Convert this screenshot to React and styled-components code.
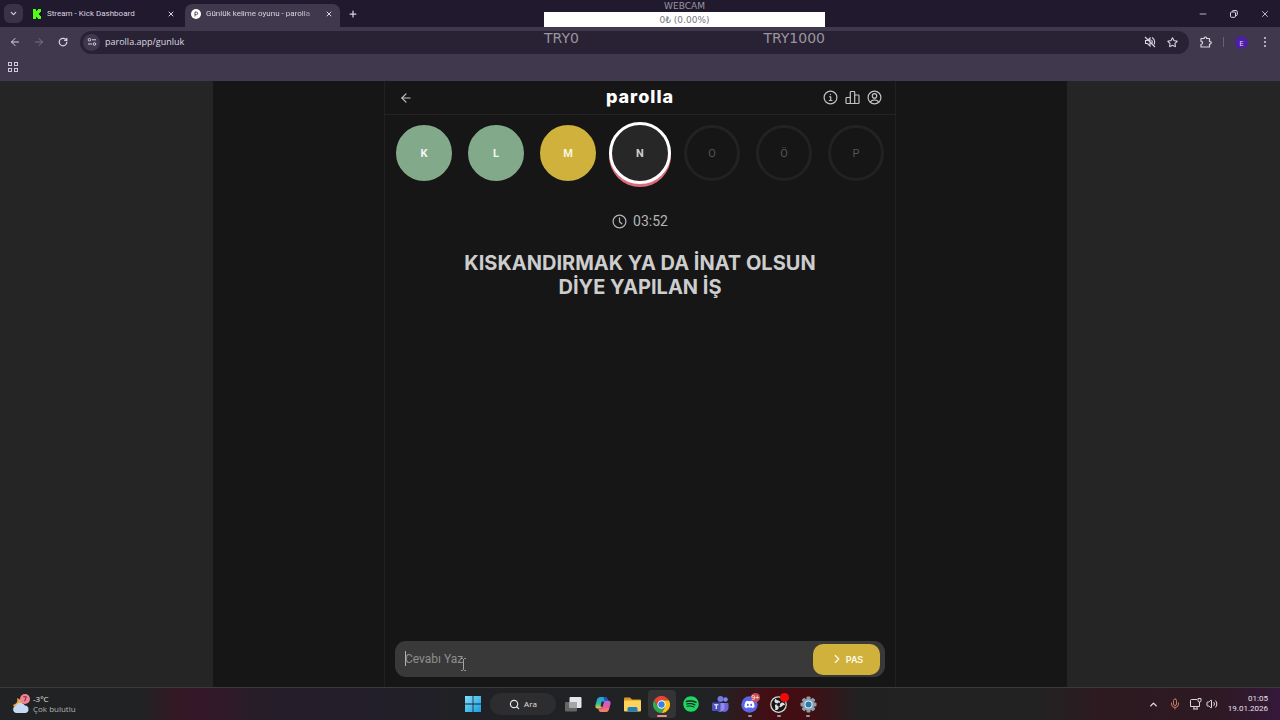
import React from "react";
import styled, { createGlobalStyle } from "styled-components";
import {
  ArrowLeft,
  ArrowRight,
  ChevronDown,
  ChevronRight,
  ChevronUp,
  Mic,
  Minus,
  Plus,
  RotateCw,
  Search,
  Star,
  Volume2,
  X
} from "lucide-react";
import { FaDiscord, FaSpotify } from "react-icons/fa";

const GlobalStyle = createGlobalStyle`
  * {
    box-sizing: border-box;
  }
  body {
    margin: 0;
    background: #161616;
    font-family: "Open Sans", "Noto Sans", sans-serif;
  }
  button {
    border: 0;
    padding: 0;
    background: none;
    color: inherit;
    font: inherit;
  }
`;

const Screen = styled.div`
  display: flex;
  flex-direction: column;
  min-height: 100vh;
  position: relative;
`;

/* browser */

const TabStrip = styled.div`
  display: flex;
  align-items: flex-end;
  height: 27px;
  padding-left: 4px;
  background: #21192d;
  color: #d9d4e0;
`;

const TabSearch = styled.button`
  display: grid;
  place-items: center;
  width: 19px;
  height: 19px;
  margin-bottom: 4px;
  border-radius: 6px;
  background: #3a3346;
`;

const Tab = styled.div`
  display: flex;
  align-items: center;
  gap: 5px;
  width: ${({ active }) => (active ? "155px" : "162px")};
  height: 23px;
  padding: ${({ active }) => (active ? "0 6px 4px" : "0 9px 4px")};
  border-radius: 7px 7px 0 0;
  background: ${({ active }) => (active ? "#40384c" : "transparent")};
`;

const TabTitle = styled.span`
  flex: 1;
  overflow: hidden;
  white-space: nowrap;
  font-family: Roboto, sans-serif;
  font-size: 8px;
  line-height: 12px;
  mask-image: ${({ fade }) =>
    fade ? "linear-gradient(90deg, #000 85%, transparent)" : "none"};
`;

const IconButton = styled.button`
  display: grid;
  place-items: center;
  width: ${({ size = 12 }) => size}px;
  height: ${({ size = 12 }) => size}px;
  color: ${({ dim }) => (dim ? "#7b7385" : "inherit")};
`;

const NewTab = styled(IconButton)`
  margin: 0 0 7px 7px;
`;

const WindowControls = styled.div`
  display: flex;
  gap: 19px;
  margin-left: auto;
  padding: 0 9px 7px 0;
`;

const Toolbar = styled.div`
  display: flex;
  align-items: center;
  height: 30px;
  padding: 0 9px;
  background: #40384c;
  color: #d9d4e0;
`;

const NavButtons = styled.div`
  display: flex;
  gap: 12px;
`;

const AddressBar = styled.div`
  display: flex;
  flex: 1;
  align-items: center;
  gap: 10px;
  height: 23px;
  margin: 0 11px;
  padding: 0 11px 0 3px;
  border-radius: 12px;
  background: #292234;
`;

const SiteInfo = styled(IconButton)`
  border-radius: 50%;
  background: #40384c;
  margin-right: -5px;
`;

const AddressInput = styled.input`
  flex: 1;
  min-width: 0;
  padding: 0;
  border: 0;
  outline: 0;
  background: none;
  color: #dedae3;
  font: 9px/14px "Open Sans", sans-serif;
`;

const Extensions = styled.div`
  display: flex;
  align-items: center;
  gap: 11px;
`;

const Divider = styled.span`
  width: 1px;
  height: 10px;
  background: #6a6076;
`;

const Profile = styled.button`
  width: 13px;
  height: 13px;
  border-radius: 50%;
  background: #4c1fa6;
  color: #e4daf5;
  font-size: 8px;
  line-height: 13px;
`;

const Bookmarks = styled.div`
  display: flex;
  align-items: center;
  height: 24px;
  padding: 0 7px 5px;
  background: #40384c;
  color: #cfc9d6;
`;

/* donation goal shown over the browser */

const Goal = styled.div`
  position: absolute;
  top: 0;
  left: 544px;
  width: 281px;
  color: #99959f;
  font-family: "DejaVu Sans", sans-serif;
  font-size: 9px;
  line-height: 12px;
  text-align: center;
`;

const GoalBar = styled.div`
  height: 15px;
  background: #fff;
  color: #77747b;
  line-height: 16px;
`;

const GoalRange = styled.div`
  display: flex;
  justify-content: space-between;
  font-size: 14px;
  line-height: 23px;
`;

/* game */

const Page = styled.main`
  display: flex;
  flex: 1;
  justify-content: center;
  background: #252525;
  font-family: Inter, sans-serif;
`;

const Stage = styled.div`
  display: flex;
  justify-content: center;
  width: 66.7%;
  background: #161616;
`;

const Game = styled.section`
  display: flex;
  flex-direction: column;
  width: 100%;
  max-width: 512px;
  border: solid #212121;
  border-width: 0 1px;
`;

const GameHeader = styled.header`
  display: grid;
  grid-template-columns: 1fr auto 1fr;
  align-items: center;
  height: 34px;
  padding: 0 13px;
  border-bottom: 1px solid #232323;
  color: #c2c2c2;
`;

const Logo = styled.h1`
  margin: 0;
  padding-bottom: 2px;
  color: #fff;
  font-family: Inter, sans-serif;
  font-size: 18px;
  font-weight: 800;
  letter-spacing: 1px;
  line-height: 24px;
`;

const HeaderActions = styled.div`
  display: flex;
  justify-content: flex-end;
  gap: 6px;
`;

const Letters = styled.div`
  display: flex;
  justify-content: space-between;
  padding: 10px 11px;
`;

const letterColors = {
  correct: ["#82aa8a", "#82aa8a", "#f2f7f2"],
  passed: ["#cfb13c", "#cfb13c", "#fbf6e2"],
  current: ["#272727", "#fff", "#cfcfcf"],
  waiting: ["transparent", "#222", "#555"]
};

const Letter = styled.div`
  display: grid;
  place-items: center;
  width: ${({ state }) => (state === "current" ? 62 : 56)}px;
  height: ${({ state }) => (state === "current" ? 62 : 56)}px;
  margin: ${({ state }) => (state === "current" ? "-3px" : "0")};
  border: 3px solid ${({ state }) => letterColors[state][1]};
  border-radius: 50%;
  background: ${({ state }) => letterColors[state][0]};
  box-shadow: ${({ state }) =>
    state === "current" ? "0 3px 0 #dc6b7c" : "none"};
  color: ${({ state }) => letterColors[state][2]};
  font-family: Roboto, sans-serif;
  font-size: 11px;
  font-weight: ${({ state }) => (state === "waiting" ? 400 : 700)};
  line-height: 15px;
`;

const Timer = styled.div`
  display: flex;
  align-items: center;
  justify-content: center;
  gap: 6px;
  margin-top: 20px;
  color: #b5b5b5;
  font-family: Roboto, sans-serif;
  font-size: 14px;
  line-height: 20px;
`;

const Question = styled.h2`
  max-width: 380px;
  margin: 20px auto 0;
  color: #cdcdcd;
  font-size: 20px;
  font-weight: 700;
  line-height: 24px;
  text-align: center;
`;

const AnswerForm = styled.form`
  position: relative;
  display: flex;
  align-items: center;
  height: 36px;
  margin: auto 10px 10px;
  padding: 0 5px 0 10px;
  border-radius: 11px;
  background: #393939;
`;

const AnswerInput = styled.input`
  flex: 1;
  min-width: 0;
  padding: 0;
  border: 0;
  outline: 0;
  background: none;
  color: #ddd;
  font: 12px/20px Roboto, sans-serif;
  &::placeholder {
    color: #8e8e8e;
    opacity: 1;
  }
`;

const Caret = styled.span`
  position: absolute;
  top: 10px;
  left: 10px;
  width: 1px;
  height: 15px;
  background: #b0b0b0;
`;

const Pointer = styled.svg`
  position: absolute;
  top: 17px;
  left: 65px;
`;

const PassButton = styled.button`
  display: flex;
  align-items: center;
  justify-content: center;
  gap: 2px;
  width: 67px;
  height: 31px;
  border-radius: 10px;
  background: #cfb13c;
  color: #fffbea;
  font-size: 9px;
  font-weight: 600;
`;

/* taskbar */

const Taskbar = styled.footer`
  display: grid;
  grid-template-columns: 1fr auto 1fr;
  align-items: center;
  height: 33px;
  padding: 0 12px;
  border-top: 1px solid #3b3b3c;
  background: linear-gradient(
    90deg,
    #202223 0%,
    #212223 11%,
    #351724 14%,
    #32182a 17%,
    #261d29 20%,
    #221e2a 30%,
    #202124 36%,
    #212224 56%,
    #420e14 60%,
    #400e13 63%,
    #222122 67%,
    #222223 81%,
    #2d1a20 86%,
    #2d1923 95%,
    #35183a 100%
  );
  color: #e4e2e3;
  font-size: 8px;
  line-height: 10px;
`;

const Weather = styled.button`
  display: flex;
  align-items: center;
  gap: 3px;
  text-align: left;
`;

const Muted = styled.div`
  color: #b5b3b4;
`;

const Apps = styled.div`
  display: flex;
  align-items: center;
  padding-left: 2px;
`;

const SearchPill = styled.button`
  display: flex;
  align-items: center;
  justify-content: center;
  gap: 4px;
  width: 66px;
  height: 22px;
  margin: 0 3px;
  border-radius: 11px;
  background: #2d2d30;
`;

const Pinned = styled.div`
  display: grid;
  grid-template-columns: repeat(9, 1fr);
  justify-items: center;
  width: 264px;
`;

const TaskButton = styled.button`
  position: relative;
  display: grid;
  place-items: center;
  width: 28px;
  height: 28px;
  border-radius: 4px;
  background: ${({ active }) => (active ? "#343436" : "transparent")};
  &::after {
    content: "";
    position: absolute;
    bottom: 1px;
    width: ${({ active }) => (active ? 10 : 4)}px;
    height: 2px;
    border-radius: 1px;
    background: ${({ active, open }) =>
      active ? "#ef8f87" : open ? "#9b9596" : "transparent"};
  }
`;

const Badge = styled.span`
  position: absolute;
  top: 3px;
  right: 4px;
  min-width: 9px;
  height: 9px;
  border-radius: 5px;
  background: ${({ color }) => color};
  color: #fff;
  font-size: 7px;
  line-height: 9px;
`;

const Tray = styled.div`
  display: flex;
  align-items: center;
  justify-content: flex-end;
`;

const TrayIcon = styled(IconButton)`
  margin-right: ${({ gap }) => gap}px;
`;

const Clock = styled.div`
  font-family: Roboto, sans-serif;
  text-align: right;
`;

const KickIcon = () => (
  <svg width="10" height="10" viewBox="0 0 10 10">
    <rect width="10" height="10" fill="#101a10" />
    <path
      d="M1 0H4V2H5V1H6V0H9V3H8V4H7V6H8V7H9V10H6V9H5V8H4V10H1Z"
      fill="#52fb1a"
    />
  </svg>
);

const ParollaIcon = () => (
  <svg width="10" height="10" viewBox="0 0 10 10">
    <circle cx="5" cy="5" r="5" fill="#fff" />
    <path
      d="M4 7.5V3H5.3A1.3 1.3 0 0 1 5.3 5.7H4"
      fill="none"
      stroke="#55505c"
    />
  </svg>
);

const RestoreIcon = () => (
  <svg width="8" height="8" viewBox="0 0 8 8" fill="none" stroke="#d9d4e0">
    <rect x=".5" y="2" width="5" height="5.3" rx="1" />
    <path d="M2.4 1.8V1.2Q2.4.5 3.2.5H6Q7.3.5 7.3 1.8V4.7Q7.3 5.5 6 5.5" />
  </svg>
);

const TuneIcon = () => (
  <svg width="10" height="10" viewBox="0 0 10 10" fill="none" stroke="#d9d4e0">
    <circle cx="2.5" cy="2.8" r="1.3" />
    <path d="M5 2.8H9M1 7H5" />
    <circle cx="7.5" cy="7" r="1.3" />
  </svg>
);

const MutedIcon = () => (
  <svg
    width="12"
    height="12"
    viewBox="0 0 24 24"
    fill="none"
    stroke="currentColor"
    strokeWidth="2.2"
  >
    <path d="M3 9H7L12 4V20L7 15H3ZM15 8Q18 12 15 16M16 3Q24 8 20 17M2 2L22 22" />
  </svg>
);

const ExtensionIcon = () => (
  <svg
    width="12"
    height="12"
    viewBox="0 0 12 12"
    fill="none"
    stroke="currentColor"
    strokeWidth="1.2"
    strokeLinejoin="round"
  >
    <path d="M1 2.5H4.2Q4 1 5.4 1T6.6 2.5H9.5V5.5Q11.2 5.3 11.2 6.7T9.5 8V11H1V8.3Q2.6 8.3 2.6 6.8T1 5.3Z" />
  </svg>
);

const GridIcon = () => (
  <svg
    width="12"
    height="12"
    viewBox="0 0 12 12"
    fill="none"
    stroke="#cfc9d6"
    shapeRendering="crispEdges"
  >
    <path d="M1.5 1.5H4.5V4.5H1.5ZM7.5 1.5H10.5V4.5H7.5ZM1.5 7.5H4.5V10.5H1.5ZM7.5 7.5H10.5V10.5H7.5Z" />
  </svg>
);

const DotsIcon = () => (
  <svg width="4" height="12" viewBox="0 0 4 12" fill="#d9d4e0">
    <circle cx="2" cy="2" r="1" />
    <circle cx="2" cy="6" r="1" />
    <circle cx="2" cy="10" r="1" />
  </svg>
);

const StrokeIcon = ({ children }) => (
  <svg
    width="15"
    height="15"
    viewBox="0 0 15 15"
    fill="none"
    stroke="currentColor"
    strokeWidth="1.2"
    strokeLinecap="round"
    strokeLinejoin="round"
  >
    {children}
  </svg>
);

const InfoIcon = () => (
  <StrokeIcon>
    <circle cx="7.5" cy="7.5" r="6.4" />
    <path d="M6.6 6.8H7.7V10.3M6.3 10.5H9M7.4 4.4V4.6" />
  </StrokeIcon>
);

const StatsIcon = () => (
  <StrokeIcon>
    <path d="M5.3 13.5H1.8Q1 13.5 1 12.7V8.3Q1 7.5 1.8 7.5H5.3" />
    <path d="M5.3 13.5V2.3Q5.3 1.5 6.1 1.5H8.9Q9.7 1.5 9.7 2.3V13.5Z" />
    <path d="M9.7 5H13.2Q14 5 14 5.8V12.7Q14 13.5 13.2 13.5H9.7" />
  </StrokeIcon>
);

const UserIcon = () => (
  <StrokeIcon>
    <circle cx="7.5" cy="7.5" r="6.4" />
    <circle cx="7.5" cy="5.9" r="2.2" />
    <path d="M3.4 12Q4.4 9.8 7.5 9.8T11.6 12" />
  </StrokeIcon>
);

const ClockIcon = () => (
  <StrokeIcon>
    <circle cx="7.5" cy="7.5" r="6.4" />
    <path d="M7.5 3.8V7.7L9.8 9.8" />
  </StrokeIcon>
);

const WeatherIcon = () => (
  <svg width="18" height="21" viewBox="0 0 18 21">
    <path d="M5 4Q7 9 1 11Q3 15 8 14L11 7Z" fill="#efa83d" />
    <path
      d="M4 19A3.6 3.6 0 0 1 3.8 12A5 5 0 0 1 13 11.5A3.8 3.8 0 0 1 13.5 19Z"
      fill="#c5d9f5"
    />
    <circle cx="13" cy="5" r="5" fill="#f08493" />
    <path d="M11.3 2.8H14.4L12.6 7.2" fill="none" stroke="#702b3b" />
  </svg>
);

const StartIcon = () => (
  <svg width="16" height="16" viewBox="0 0 16 16">
    <defs>
      <linearGradient id="start" x2="1" y2="1">
        <stop stopColor="#83dcf8" />
        <stop offset="1" stopColor="#159fe3" />
      </linearGradient>
    </defs>
    <path
      d="M0 0H7.6V7.6H0ZM8.4 0H16V7.6H8.4ZM0 8.4H7.6V16H0ZM8.4 8.4H16V16H8.4Z"
      fill="url(#start)"
    />
  </svg>
);

const TaskViewIcon = () => (
  <svg width="17" height="15" viewBox="0 0 17 15">
    <rect y="5" width="12" height="9.5" rx="1" fill="#656565" />
    <rect x="4.5" width="12" height="11" rx="1" fill="#e5e5e5" />
    <path d="M4.5 5H12V11H5.5Q4.5 11 4.5 10Z" fill="#a5a5a5" />
  </svg>
);

const CopilotIcon = () => (
  <svg width="16" height="15" viewBox="0 0 16 15">
    <defs>
      <linearGradient id="cop1" x2="0" y2="1">
        <stop stopColor="#239be9" />
        <stop offset=".55" stopColor="#31b9a2" />
        <stop offset="1" stopColor="#ecc53c" />
      </linearGradient>
      <linearGradient id="cop2" x2="0" y2="1">
        <stop stopColor="#a768ee" />
        <stop offset=".5" stopColor="#e557a1" />
        <stop offset="1" stopColor="#f48a55" />
      </linearGradient>
    </defs>
    <path
      d="M5 0H10Q12 0 12.4 2L12.8 3.6H10.5Q9 3.6 8.6 5L7 10Q6.6 11.5 5 11.5H3Q-.3 11.5.5 8L2 2.5Q2.7 0 5 0Z"
      fill="url(#cop1)"
    />
    <path
      d="M11 15H6Q4 15 3.6 13L3.2 11.5H5.5Q7 11.5 7.4 10L9 5Q9.4 3.6 11 3.6H13Q16.3 3.6 15.5 7L14 12.5Q13.3 15 11 15Z"
      fill="url(#cop2)"
    />
    <path d="M6.6 4.6H8.7L7.6 9.5H5.5Z" fill="#25243a" />
    <path d="M8.5 0H10Q12 0 12.4 2L12.8 3.6H9.6Z" fill="#1955b5" />
  </svg>
);

const FolderIcon = () => (
  <svg width="17" height="15" viewBox="0 0 17 15">
    <path d="M0 1.5Q0 .5 1 .5H6L8 2.5H16Q17 2.5 17 3.5V12H0Z" fill="#d99a23" />
    <rect y="3.5" width="17" height="11" rx="1" fill="#ffd35a" />
    <path d="M3.5 14.5V11.5Q3.5 10 5 10H12Q13.5 10 13.5 11.5V14.5Z" fill="#207fc2" />
  </svg>
);

const ChromeIcon = () => (
  <svg width="17" height="17" viewBox="0 0 48 48">
    <path d="M24 12H44.8A24 24 0 0 1 24 48L34.4 30Z" fill="#fbc116" />
    <path
      d="M3.2 12L13.6 30A12 12 0 0 1 24 12H44.8A24 24 0 0 0 3.2 12Z"
      fill="#e94335"
    />
    <path
      d="M3.2 12L13.6 30L24 36L34.4 30L24 48A24 24 0 0 1 3.2 12Z"
      fill="#34a853"
    />
    <circle cx="24" cy="24" r="12" fill="#fff" />
    <circle cx="24" cy="24" r="9" fill="#3b7ee8" />
  </svg>
);

const TeamsIcon = () => (
  <svg width="17" height="17" viewBox="0 0 17 17">
    <circle cx="13.5" cy="3.5" r="2.3" fill="#7f85ee" />
    <circle cx="8.5" cy="3" r="3" fill="#7178e5" />
    <path d="M10 7H15.5Q16.5 7 16.5 8V12A4 4 0 0 1 10 15Z" fill="#6e64d5" />
    <path d="M4 7H11.5Q12.5 7 12.5 8V12A4.3 4.3 0 0 1 4 12Z" fill="#9189ec" />
    <rect y="6.5" width="8.5" height="8.5" rx="1" fill="#4b50bc" />
    <path d="M2.2 8.7H6.3M4.25 8.7V13" stroke="#fff" strokeWidth="1.1" />
  </svg>
);

const DiscordIcon = () => (
  <svg width="17" height="17" viewBox="0 0 17 17">
    <circle cx="8.5" cy="8.5" r="8.2" fill="#5964e8" />
    <FaDiscord x="3" y="3" size={11} color="#fff" />
  </svg>
);

const ObsIcon = () => (
  <svg width="17" height="17" viewBox="0 0 34 34">
    <circle
      cx="17"
      cy="17"
      r="15.5"
      fill="#151515"
      stroke="#d8d8d8"
      strokeWidth="2.5"
    />
    {[0, 120, 240].map(angle => (
      <path
        key={angle}
        d="M15 15C8 15 7 8 12 5C12 9 16 8 19 10Q21 12 20 14Q17 12 15 15Z"
        fill="#dedede"
        transform={`rotate(${angle} 17 17)`}
      />
    ))}
  </svg>
);

const SettingsIcon = () => (
  <svg width="17" height="17" viewBox="0 0 34 34">
    {[0, 45, 90, 135].map(angle => (
      <rect
        key={angle}
        x="13"
        y="1"
        width="8"
        height="32"
        rx="2"
        fill="#8e9da9"
        transform={`rotate(${angle} 17 17)`}
      />
    ))}
    <circle cx="17" cy="17" r="12" fill="#8e9da9" />
    <circle cx="17" cy="17" r="8" fill="#e1eef5" />
    <circle cx="17" cy="17" r="6" fill="#2779ae" />
  </svg>
);

const NetworkIcon = () => (
  <svg width="12" height="12" viewBox="0 0 12 12" fill="none" stroke="#dcd8da">
    <path d="M7 1.5H1.5Q.5 1.5.5 2.5V8.5H9.5V6.5M3 11H8M4 8.5V11M7 8.5V11" />
    <path d="M8 .5V3Q8 4 9.5 4T11 3V.5ZM9.5 4V7" />
  </svg>
);

const letters = [
  ["K", "correct"],
  ["L", "correct"],
  ["M", "passed"],
  ["N", "current"],
  ["O", "waiting"],
  ["Ö", "waiting"],
  ["P", "waiting"]
];

const apps = [
  { name: "Görev görünümü", icon: <TaskViewIcon /> },
  { name: "Copilot", icon: <CopilotIcon /> },
  { name: "Dosya Gezgini", icon: <FolderIcon /> },
  { name: "Chrome", icon: <ChromeIcon />, active: true },
  { name: "Spotify", icon: <FaSpotify size={16} color="#1ed760" /> },
  { name: "Teams", icon: <TeamsIcon /> },
  { name: "Discord", icon: <DiscordIcon />, open: true, badge: "9+" },
  { name: "OBS", icon: <ObsIcon />, open: true, dot: true },
  { name: "Ayarlar", icon: <SettingsIcon />, open: true }
];

const Browser = () => (
  <header>
    <TabStrip>
      <TabSearch aria-label="Sekme ara">
        <ChevronDown size={9} strokeWidth={3} />
      </TabSearch>
      <Tab>
        <KickIcon />
        <TabTitle>Stream - Kick Dashboard</TabTitle>
        <IconButton aria-label="Kapat" size={10}>
          <X size={8} strokeWidth={3} />
        </IconButton>
      </Tab>
      <Tab active>
        <ParollaIcon />
        <TabTitle fade>Günlük kelime oyunu - parolla</TabTitle>
        <IconButton aria-label="Kapat" size={10}>
          <X size={8} strokeWidth={3} />
        </IconButton>
      </Tab>
      <NewTab aria-label="Yeni sekme">
        <Plus size={10} strokeWidth={3} />
      </NewTab>
      <WindowControls>
        <IconButton aria-label="Simge durumuna küçült">
          <Minus size={10} />
        </IconButton>
        <IconButton aria-label="Geri yükle">
          <RestoreIcon />
        </IconButton>
        <IconButton aria-label="Pencereyi kapat">
          <X size={10} />
        </IconButton>
      </WindowControls>
    </TabStrip>
    <Toolbar>
      <NavButtons>
        <IconButton aria-label="Geri">
          <ArrowLeft size={12} strokeWidth={2} />
        </IconButton>
        <IconButton aria-label="İleri" dim>
          <ArrowRight size={12} strokeWidth={2} />
        </IconButton>
        <IconButton aria-label="Yenile">
          <RotateCw size={10} strokeWidth={3} />
        </IconButton>
      </NavButtons>
      <AddressBar>
        <SiteInfo aria-label="Site bilgileri" size={17}>
          <TuneIcon />
        </SiteInfo>
        <AddressInput aria-label="Adres" defaultValue="parolla.app/gunluk" />
        <IconButton aria-label="Ses kapalı">
          <MutedIcon />
        </IconButton>
        <IconButton aria-label="Yer işareti ekle">
          <Star size={11} strokeWidth={2.4} />
        </IconButton>
      </AddressBar>
      <Extensions>
        <IconButton aria-label="Uzantılar">
          <ExtensionIcon />
        </IconButton>
        <Divider />
        <Profile>E</Profile>
        <IconButton aria-label="Menü">
          <DotsIcon />
        </IconButton>
      </Extensions>
    </Toolbar>
    <Bookmarks>
      <IconButton aria-label="Uygulamalar">
        <GridIcon />
      </IconButton>
    </Bookmarks>
  </header>
);

const App = () => (
  <>
    <GlobalStyle />
    <Screen>
      <Browser />
      <Page>
        <Stage>
          <Game>
            <GameHeader>
              <IconButton aria-label="Geri dön" size={16}>
                <ArrowLeft size={14} />
              </IconButton>
              <Logo>parolla</Logo>
              <HeaderActions>
                <IconButton aria-label="Bilgi" size={16}>
                  <InfoIcon />
                </IconButton>
                <IconButton aria-label="İstatistikler" size={16}>
                  <StatsIcon />
                </IconButton>
                <IconButton aria-label="Profil" size={16}>
                  <UserIcon />
                </IconButton>
              </HeaderActions>
            </GameHeader>
            <Letters>
              {letters.map(([letter, state]) => (
                <Letter key={letter} state={state}>
                  {letter}
                </Letter>
              ))}
            </Letters>
            <Timer>
              <ClockIcon />
              03:52
            </Timer>
            <Question>KISKANDIRMAK YA DA İNAT OLSUN DİYE YAPILAN İŞ</Question>
            <AnswerForm onSubmit={e => e.preventDefault()}>
              <AnswerInput aria-label="Cevap" placeholder="Cevabı Yaz" />
              <Caret />
              <Pointer width="7" height="13" viewBox="0 0 7 13">
                <path
                  d="M1 .5H2.5L3.5 1.5L4.5.5H6M3.5 1.5V11.5M1 12.5H2.5L3.5 11.5L4.5 12.5H6"
                  fill="none"
                  stroke="#a4a4a4"
                />
              </Pointer>
              <PassButton type="button">
                <ChevronRight size={14} />
                PAS
              </PassButton>
            </AnswerForm>
          </Game>
        </Stage>
      </Page>
      <Taskbar>
        <Weather>
          <WeatherIcon />
          <div>
            -3°C
            <Muted>Çok bulutlu</Muted>
          </div>
        </Weather>
        <Apps>
          <TaskButton aria-label="Başlat">
            <StartIcon />
          </TaskButton>
          <SearchPill>
            <Search size={11} strokeWidth={2.6} />
            Ara
          </SearchPill>
          <Pinned>
            {apps.map(({ name, icon, active, open, badge, dot }) => (
              <TaskButton
                key={name}
                aria-label={name}
                active={active}
                open={open}
              >
                {icon}
                {badge && <Badge color="#cf4a57">{badge}</Badge>}
                {dot && <Badge color="#f20a0a" />}
              </TaskButton>
            ))}
          </Pinned>
        </Apps>
        <Tray>
          <TrayIcon aria-label="Gizli simgeler" gap={9}>
            <ChevronUp size={11} strokeWidth={3} />
          </TrayIcon>
          <TrayIcon aria-label="Mikrofon" gap={9}>
            <Mic size={12} color="#c9785e" />
          </TrayIcon>
          <TrayIcon aria-label="Ağ" gap={4}>
            <NetworkIcon />
          </TrayIcon>
          <TrayIcon aria-label="Ses" gap={10}>
            <Volume2 size={12} />
          </TrayIcon>
          <Clock>
            01:05
            <br />
            19.01.2026
          </Clock>
        </Tray>
      </Taskbar>
      <Goal>
        WEBCAM
        <GoalBar>0₺ (0.00%)</GoalBar>
        <GoalRange>
          <span>TRY0</span>
          <span>TRY1000</span>
        </GoalRange>
      </Goal>
    </Screen>
  </>
);

export default App;
